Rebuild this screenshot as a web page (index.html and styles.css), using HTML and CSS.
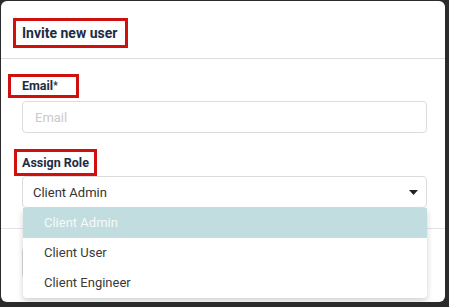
FILE: index.html
```html
<!DOCTYPE html>
<html lang="en">
<head>
    <meta charset="UTF-8">
    <meta name="viewport" content="width=device-width, initial-scale=1.0">
    <title>Invite new user</title>
    <link rel="stylesheet" href="styles.css">
</head>
<body>

    <div class="modal">
        <div class="modal-header">
            <h2 class="mark title-mark">Invite new user</h2>
        </div>

        <div class="modal-body">
            <label class="mark email-mark" for="email">Email<span class="req">*</span></label>
            <input type="text" id="email" class="field" placeholder="Email">

            <div class="mark role-mark">Assign Role</div>
            <div class="select-wrap">
                <div class="select">
                    <span>Client Admin</span>
                    <svg class="caret" width="9" height="5" viewBox="0 0 9 5"><path d="M0 0h9L4.5 5z" fill="#222"/></svg>
                </div>
                <ul class="menu">
                    <li class="active">Client Admin</li>
                    <li>Client User</li>
                    <li>Client Engineer</li>
                </ul>
            </div>
        </div>

        <!-- footer buttons sit under the open menu -->
        <div class="modal-footer">
            <button class="btn btn-light" aria-label="Cancel"></button>
            <button class="btn btn-dark" aria-label="Send Invite"></button>
        </div>
    </div>

</body>
</html>
```

FILE: styles.css
```css
body {
    margin: 0;
    padding: 1px 4px 5px 1px;
    background-color: #2b2b2b; /* dark backdrop */
    font-family: Roboto, "Liberation Sans", sans-serif;
    height: 307px;
    box-sizing: border-box;
}

.modal {
    background-color: #fff;
    border-radius: 6px;
    height: 301px;
    position: relative;
    overflow: hidden;
    display: flex;
    flex-direction: column;
}

/* red annotation boxes */
.mark {
    display: inline-block;
    border: 3px solid #d00f0f;
    color: #1d2d44;
    font-weight: 700;
}

.modal-header {
    padding: 17px 12px 10px;
    border-bottom: 1px solid #dedede;
}

.title-mark {
    margin: 0;
    font-size: 14px;
    line-height: 24px;
    padding: 0 8px 0 6px;
}

.modal-body {
    padding: 15px 18px 0 21px;
    display: flex;
    flex-direction: column;
    align-items: flex-start;
}

.email-mark {
    margin-left: -14px;
    font-size: 12.5px;
    line-height: 18px;
    padding: 0 18px 0 11px;
}

.req {
    font-size: 10px;
    vertical-align: top;
}

.field {
    margin-top: 3px;
    width: 100%;
    box-sizing: border-box;
    height: 32px;
    border: 1px solid #dcdcdc;
    border-radius: 4px;
    padding: 0 12px;
    font-family: inherit;
    font-size: 13px;
    color: #333;
}

.field::placeholder {
    color: #c9c9c9;
}

.role-mark {
    margin-top: 16px;
    margin-left: -8px;
    font-size: 12.5px;
    line-height: 21px;
    padding: 0 5px 0 5px;
}

.select-wrap {
    position: relative;
    width: 100%;
}

.select {
    height: 32px;
    box-sizing: border-box;
    border: 1px solid #dcdcdc;
    border-radius: 4px;
    display: flex;
    align-items: center;
    justify-content: space-between;
    padding: 0 8px 0 10px;
    font-size: 13px;
    color: #333;
}

.menu {
    position: absolute;
    top: 32px;
    left: 1px;
    right: 0;
    margin: 0;
    padding: 0;
    list-style: none;
    background-color: #fff;
    border-radius: 0 0 4px 4px;
    box-shadow: 0 3px 6px rgba(0, 0, 0, 0.18);
    z-index: 2;
    overflow: hidden;
}

.menu li {
    height: 30px;
    line-height: 30px;
    padding-left: 21px;
    font-size: 13px;
    color: #3a3a3a;
}

.menu li.active {
    background-color: #c2dde0; /* light teal highlight */
    color: #f4fafa;
}

.modal-footer {
    margin-top: 20px;
    border-top: 1px solid #e3e3e3;
    padding: 18px 18px 0 21px;
    display: flex;
    justify-content: space-between;
}

.btn {
    height: 32px;
    width: 80px;
    border-radius: 4px;
}

.btn-light {
    background-color: #fff;
    border: 1px solid #dcdcdc;
}

.btn-dark {
    background-color: #1d2d44;
    border: none;
}
```
